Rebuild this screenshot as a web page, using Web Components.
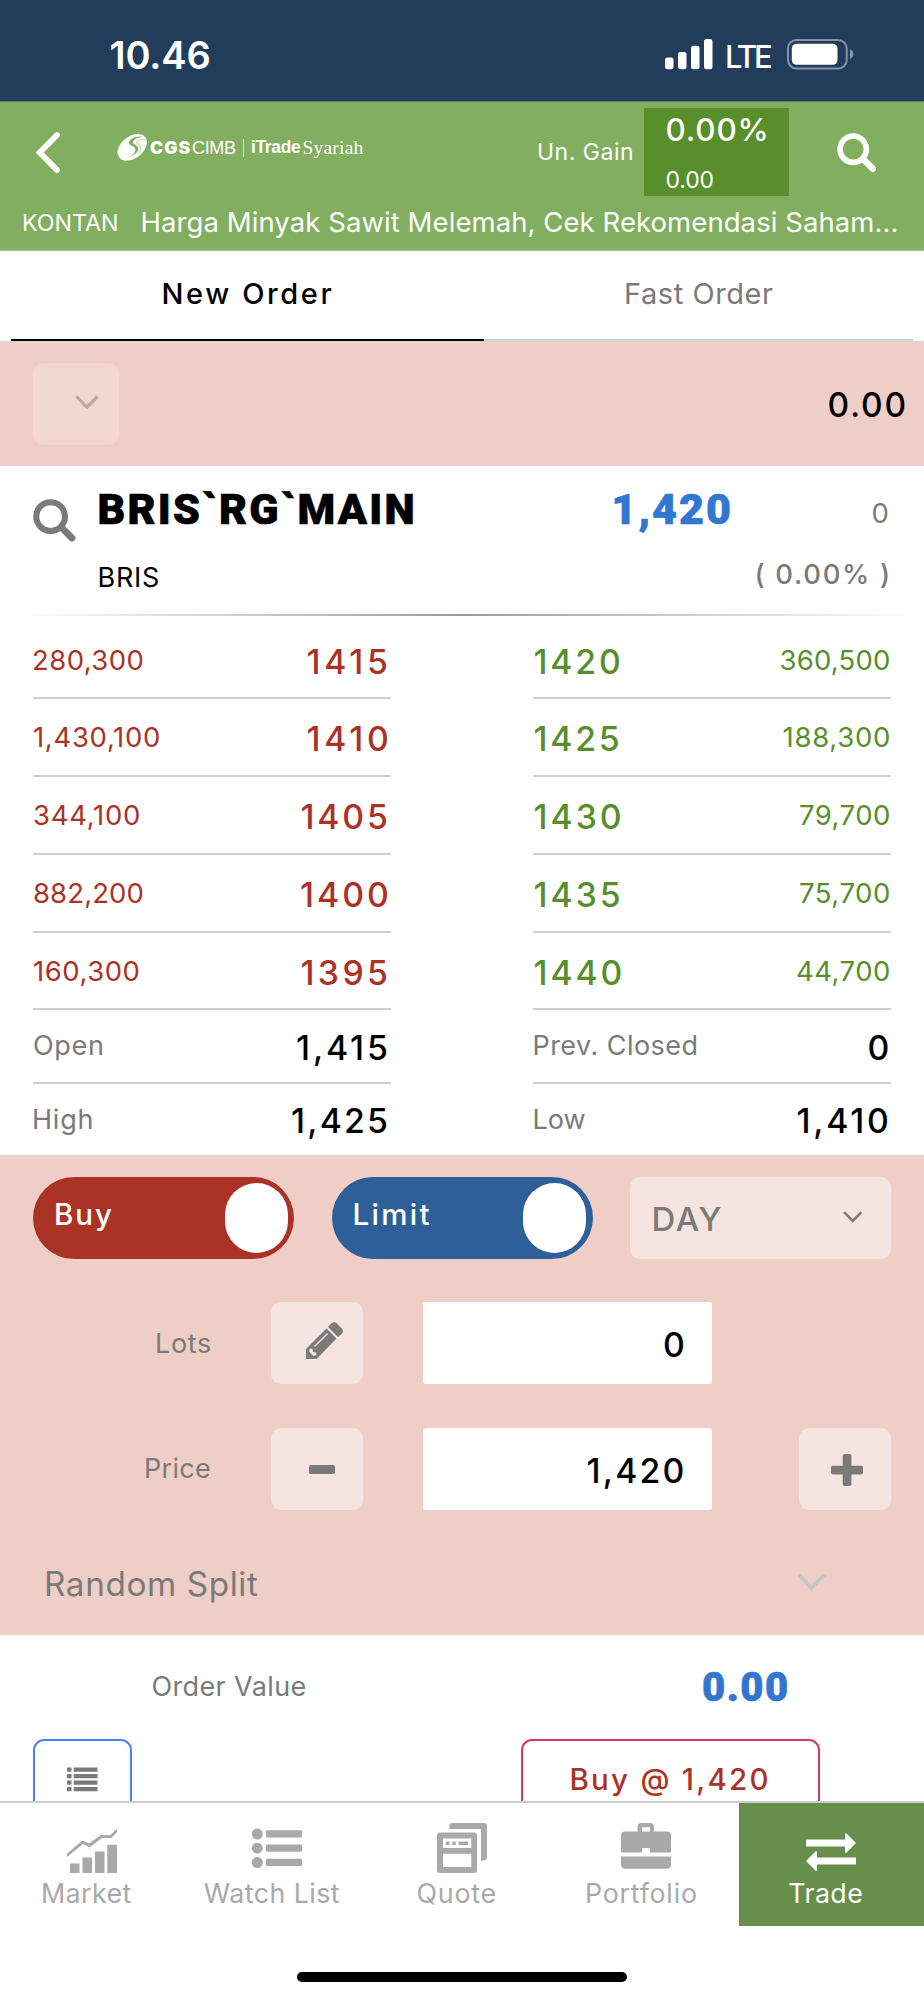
<!DOCTYPE html>
<html lang="id">
<head>
<meta charset="utf-8">
<title>iTrade Syariah</title>
<style>
html,body{margin:0;padding:0;background:#fff}
body{width:924px;height:2000px;overflow:hidden;font-family:Inter,"Liberation Sans",sans-serif}
</style>
</head>
<body>
<trade-app></trade-app>
<script>
const ctx = document.createElement('canvas').getContext('2d');
const FAMILIES = {
  inter: 'Inter, "Liberation Sans", sans-serif',
  roboto: 'Roboto, sans-serif',
  sans: '"Liberation Sans", sans-serif',
  serif: '"Liberation Serif", serif'
};

/* A single line of text tracked out so that its ink fills exactly "w" pixels. */
class UiText extends HTMLElement {
  connectedCallback() {
    if (this.shadowRoot) return;
    const a = (n, d) => this.getAttribute(n) || d;
    const size = parseFloat(a('size', '27')), weight = a('weight', '400');
    const face = a('face', 'inter'), family = FAMILIES[face];
    const w = parseFloat(a('w', '0'));
    const text = this.textContent;
    ctx.font = `${weight} ${size}px ${family}`;
    const m = ctx.measureText(text);
    const ink = m.actualBoundingBoxLeft + m.actualBoundingBoxRight;
    const n = [...text].length;
    const ls = n > 1 && w ? (w - ink) / (n - 1) : 0;
    const lead = face === 'inter' ? size + 1.5 : size;
    const root = this.attachShadow({mode: 'open'});
    root.innerHTML = `<style>
      :host{display:block;flex:none;width:${w || ink}px;height:${size}px;
        font:${weight} ${size}px/${lead}px ${family};letter-spacing:${ls}px;white-space:pre;
        color:${a('color', 'inherit')};margin-left:${a('ml', '0')}px;margin-top:${a('mt', '0')}px;
        ${face === 'roboto' ? '-webkit-text-stroke:.7px currentColor' : ''}}
      span{display:inline-block;margin-left:${m.actualBoundingBoxLeft}px}
    </style><span><slot></slot></span>`;
  }
}
customElements.define('ui-text', UiText);

const ICONS = {
  back: [24, 41, '<path d="M21 3 3.700 20.500 21 38" fill="none" stroke="currentColor" stroke-width="5.800" stroke-linecap="round"/>'],
  search: [40, 40, '<circle cx="16.200" cy="16.200" r="13.200" fill="none" stroke="currentColor" stroke-width="5.600"/><path d="m26.800 26.800 9 9" stroke="currentColor" stroke-width="6.400" stroke-linecap="round"/>'],
  chevron: [26, 16, '<path d="m1.5 1.5 11.500 11.700L24.500 1.500" fill="none" stroke="currentColor" stroke-width="3.400"/>'],
  signal: [48, 31, '<rect y="18.500" width="8.500" height="11.800" rx="2.500"/><rect x="13" y="13" width="8.500" height="17.300" rx="2.500"/><rect x="26" y="6.700" width="8.500" height="23.600" rx="2.500"/><rect x="39" y="0" width="8.500" height="30.300" rx="2.500"/>'],
  battery: [68, 31, '<rect x="1" y="1" width="58.700" height="28.500" rx="8.500" fill="none" stroke="#8492a5" stroke-width="2"/><rect x="4.800" y="4.800" width="45.700" height="21" rx="4.800"/><path d="M62.800 10.300c5 1.500 5 8 0 9.500z" fill="#8492a5"/>'],
  logo: [31, 27, '<g transform="translate(15.2 13.300)"><ellipse rx="16.500" ry="11" transform="rotate(-38)"/><path d="M10.500-10.600C3-11.500-3.500-8-3.200-4.300-2.800-1.500 3.500-1.200 3.200 2.800 3 6.500-1.500 9-4.500 10.300 2 8.200 6.200 5 6.200 1.500 6.200-2.200.6-2.400.8-5 .9-8 5.500-9.600 10.500-10.600z" fill="#81ae5f"/><path d="M14-7C8-9 3-6 4.500-4.300 9-2.500 10 2 6 6.500" fill="none" stroke="#81ae5f" stroke-width=".6"/></g>'],
  pencil: [37, 37, '<path d="M0 27 20.500 6.500 30.500 16.500 10.500 37H0z"/><path d="m22 5 3.700-3.700Q28-.8 30.500 1.200l5.500 5.500Q38 9 36 11.500L32 15z"/><path d="m4 26.500 2.500.3.500 3.200 3.200.5.300 2.500-3 1L3 29.500z" fill="#f6e4e0"/><path d="M8.500 24.500 21.500 11.500" stroke="#f6e4e0" stroke-width="1.500"/>'],
  minus: [26, 9, '<rect width="26" height="9" rx="1.800"/>'],
  plus: [32, 32, '<rect y="11.700" width="32" height="8.700" rx="1.800"/><rect x="11.700" width="8.700" height="32" rx="1.800"/>'],
  lines: [31, 25, '<path d="M0 .5h4.500v4.300H0zM6.700.5H30.500v4.300H6.700zM0 7h4.500v4.300H0zM6.700 7H30.500v4.300H6.700zM0 13.500h4.500v4.300H0zM6.700 13.500H30.500v4.300H6.700zM0 20h4.500v4.300H0zM6.700 20H30.500v4.300H6.700z"/>'],
  market: [50, 50, '<path d="M3 40.500h9.500V50H3zM15.500 34.500H25V50h-9.500zM28 28.500h9.500V50H28zM40.300 21.700H50V50h-9.700z"/><path d="M0 30.500 15.500 17.500 22 20.500 34 12h9.500L50 5.500V9l-5.500 6H35L22.500 24.500 16 21 0 34z"/>'],
  list: [50, 50, '<circle cx="5.300" cy="11" r="5.500"/><circle cx="5.300" cy="25.200" r="5.500"/><circle cx="5.300" cy="39.500" r="5.500"/><rect x="14" y="7.300" width="36" height="7.300" rx="1"/><rect x="14" y="21.500" width="36" height="7.300" rx="1"/><rect x="14" y="35.800" width="36" height="7.300" rx="1"/>'],
  quote: [50, 50, '<path d="M12.300 6V3q0-3 3-3H47q3 0 3 3v31.500q0 3-3 3h-3V6z"/><path fill-rule="evenodd" d="M3 9.500h34q3 0 3 3V47q0 3-3 3H3q-3 0-3-3V12.500q0-3 3-3zm3 6V25h28.300v-9.500zm0 15.200V44h28.300V30.700z"/><path d="M9 18.500h3.500V22H9zm6.200 0h3.500V22h-3.500zm6.300 0H31V22h-9.500z"/>'],
  portfolio: [50, 50, '<path fill-rule="evenodd" d="M16.500 8.500V4q0-4 4-4H29q4 0 4 4v4.500H46q4 0 4 4v17H29V25h-8v4.500H0v-17q0-4 4-4zm4.500 0h8V4.300h-8z"/><path d="M0 33.500h50v8.300q0 4-4 4H4q-4 0-4-4z"/>'],
  trade: [50, 50, '<path d="M0 16.500h39v-6L40 10l10 10-10 10-1-.5v-6H0zM50 41.500H11v6l-1 .5L0 38l10-10 1 .5v6h39z"/>']
};
class UiIcon extends HTMLElement {
  connectedCallback() {
    if (this.shadowRoot) return;
    const [w, h, body] = ICONS[this.getAttribute('name')];
    const width = parseFloat(this.getAttribute('w') || w);
    this.attachShadow({mode: 'open'}).innerHTML = `<style>:host{display:block;flex:none}
      svg{display:block;fill:currentColor;overflow:visible}</style>
      <svg width="${width}" height="${width * h / w}" viewBox="0 0 ${w} ${h}">${body}</svg>`;
  }
}
customElements.define('ui-icon', UiIcon);

const define = (name, html) => {
  const t = document.createElement('template');
  t.innerHTML = html;
  customElements.define(name, class extends HTMLElement {
    constructor() {
      super();
      this.attachShadow({mode: 'open'}).append(t.content.cloneNode(true));
    }
  });
};

define('status-bar', `<style>
:host{display:flex;align-items:center;height:101px;box-sizing:border-box;padding:9px 0 0 110.500px;background:#213d5b;color:#fff}
.s{margin-left:455.500px;margin-top:-1px}.b{margin-left:15.500px;margin-top:-1px}
</style>
<ui-text size="38" weight="600" w="99">10.46</ui-text>
<ui-icon class="s" name="signal"></ui-icon>
<ui-text size="31" weight="500" w="44" ml="14" mt="2">LTE</ui-text>
<ui-icon class="b" name="battery"></ui-icon>`);

define('app-header', `<style>
:host{display:block;height:150px;box-sizing:border-box;background:#81ae5f;color:#fff;border-top:1px solid #5d8460;border-bottom:1px solid #a6cb8e}
.top{display:flex;align-items:center;height:100px;padding-left:36px}
.brand{display:flex;align-items:center;margin:-9px 0 0 57px}
.sep{width:1.500px;height:18px;background:#d4e4c9;margin:0 8px 0 6.500px}
.gain{width:145px;height:88.500px;margin-left:12px;background:#588f2b;box-sizing:border-box;padding:5.500px 0 0 22.500px}
.find{margin-left:47.500px;margin-top:1px}
.news{display:flex;align-items:center;height:40px;padding-left:24px}
</style>
<div class="top"><ui-icon name="back"></ui-icon>
<div class="brand"><ui-icon name="logo"></ui-icon>
<ui-text face="inter" weight="900" size="17.500" w="40.500" ml="2" mt="-1">CGS</ui-text><ui-text face="sans" size="18" w="44" ml="1.500">CIMB</ui-text>
<div class="sep"></div><ui-text face="sans" weight="700" size="17.500" w="49" mt="1">iTrade</ui-text><ui-text face="serif" size="19.500" w="60" ml="2.500">Syariah</ui-text></div>
<ui-text size="23" w="93" ml="175.500" mt="-1">Un. Gain</ui-text>
<div class="gain"><ui-text size="31.500" weight="500" w="99">0.00%</ui-text><ui-text size="23" w="47" mt="23">0.00</ui-text></div>
<ui-icon class="find" name="search"></ui-icon></div>
<div class="news"><ui-text size="23.300" w="93" mt="2">KONTAN</ui-text><ui-text size="27.500" w="754" ml="25.500">Harga Minyak Sawit Melemah, Cek Rekomendasi Saham...</ui-text></div>`);

define('order-tabs', `<style>
:host{display:flex;height:90px;padding:0 11px;background:#fff}
div{display:flex;height:90px;box-sizing:border-box;border-bottom:2px solid #cfd1cf;padding-top:28px}
.a{width:473px;padding-left:152.500px;border-color:#000;color:#000}.b{width:429px;padding-left:142px;color:#7a7a7a}
</style>
<div class="a"><ui-text size="29" weight="500" w="168">New Order</ui-text></div>
<div class="b"><ui-text size="29" w="147">Fast Order</ui-text></div>`);

define('account-bar', `<style>
:host{display:flex;justify-content:space-between;height:125px;box-sizing:border-box;padding:22px 19.500px 0 33px;background:#eecec7}
.sel{width:86px;height:82px;border-radius:11px;background:#f2d7d2;color:#bda9a4;box-sizing:border-box;padding:32px 0 0 41.500px}
</style>
<div class="sel"><ui-icon name="chevron" w="24"></ui-icon></div>
<ui-text size="33.500" weight="500" w="76" mt="25">0.00</ui-text>`);

define('quote-head', `<style>
:host{display:flex;height:149.500px;box-sizing:border-box;padding:22px 36px 0 32.500px;background:#fff
 linear-gradient(90deg,#fff 2%,#9c9c9c 50%,#fff 99.500%) 0 100%/100% 2px no-repeat;color:#000}
.i{color:#7a7a7a;margin-top:10.500px}
.n{margin-left:23.500px;width:515px}.p{width:116px}.c{display:flex;flex-direction:column;align-items:flex-end;flex:1;color:#7a7a7a}
</style>
<ui-icon class="i" name="search" w="43.500"></ui-icon>
<div class="n"><ui-text face="roboto" weight="900" size="43" w="313">BRIS\`RG\`MAIN</ui-text><ui-text size="27" w="58.500" mt="32.500">BRIS</ui-text></div>
<div class="p"><ui-text face="roboto" weight="900" size="43" w="115.500" color="#3176d1">1,420</ui-text></div>
<div class="c"><ui-text size="27.500" w="15.500" mt="11">0</ui-text><ui-text size="27.500" weight="500" w="131.500" mt="33">( 0.00% )</ui-text></div>`);

/* One line of the order book: what is slotted in sits at its two ends. */
define('book-row', `<style>
:host{display:flex;justify-content:space-between;align-items:center;box-sizing:border-box;height:77.800px;border-bottom:2px solid #cecece}
:host([short]){height:73.400px}:host([last]){border:0;height:71.500px}
</style><slot></slot>`);

const row = (attr, l, r) => `<book-row ${attr}><ui-text ${l[1]} w="${l[2]}">${l[0]}</ui-text><ui-text ${r[1]} w="${r[2]}">${r[0]}</ui-text></book-row>`;
const VOL = 'size="27.500"', PRICE = 'size="33.800" weight="500" mt="2"', LABEL = 'size="27" color="#7a7a7a" mt="-1"', STAT = 'size="33.800" weight="500" color="#000" mt="1"';
define('order-book', `<style>
:host{display:flex;justify-content:space-between;height:539.500px;box-sizing:border-box;padding:6px 33px 0;background:#fff}
.bid,.ask{width:358px}
.bid{color:#ab3326}.ask{color:#588f2b}
.bid book-row{padding:0 4px 0 1px}.ask book-row{padding:0 2px 0 1.500px}.ask book-row[short],.ask book-row[last]{padding-right:4px}
</style>
<div class="bid">
${row('', ['280,300', VOL, 108.5], ['1415', PRICE, 79.5])}
${row('', ['1,430,100', VOL, 125], ['1410', PRICE, 79.5])}
${row('', ['344,100', VOL, 105], ['1405', PRICE, 85.5])}
${row('', ['882,200', VOL, 108.5], ['1400', PRICE, 86])}
${row('', ['160,300', VOL, 104.5], ['1395', PRICE, 85.500])}
${row('short', ['Open', LABEL, 68], ['1,415', STAT, 90])}
${row('last', ['High', LABEL, 57.5], ['1,425', STAT, 95])}
</div>
<div class="ask">
${row('', ['1420', PRICE, 84.5], ['360,500', VOL, 108.5])}
${row('', ['1425', PRICE, 84.3], ['188,300', VOL, 105.5])}
${row('', ['1430', PRICE, 85.3], ['79,700', VOL, 89])}
${row('', ['1435', PRICE, 85.3], ['75,700', VOL, 89])}
${row('', ['1440', PRICE, 86], ['44,700', VOL, 92])}
${row('short', ['Prev. Closed', LABEL, 162], ['0', STAT, 18.5])}
${row('last', ['Low', LABEL, 51], ['1,410', STAT, 89.5])}
</div>`);

define('toggle-pill', `<style>
:host{display:flex;justify-content:space-between;width:261px;height:82px;box-sizing:border-box;border-radius:41px;padding:6px 6.500px 0 23px;color:#fff}
i{width:63px;height:70px;border-radius:31.500px;background:#fff}
</style><slot></slot><i></i>`);

define('soft-button', `<style>
:host{display:flex;align-items:center;width:92px;height:82px;box-sizing:border-box;border-radius:10px;background:#f6e4e0;color:#7a7a7a}
</style><slot></slot>`);

define('number-field', `<style>
:host{display:flex;align-items:center;justify-content:flex-end;width:289px;height:82px;box-sizing:border-box;padding-right:29.500px;border-radius:3px;background:#fff;color:#000;margin-left:60px}
</style><slot></slot>`);

define('order-form', `<style>
:host{display:block;height:479.500px;box-sizing:border-box;padding:22px 33px 0;background:#eecec7;color:#7a7a7a}
.r{display:flex;align-items:center;height:82px}
.top{justify-content:space-between}.lots{margin-top:43px}.price{margin-top:43.500px}
.lbl{width:177px;display:flex;justify-content:flex-end}
.lots soft-button,.price soft-button{margin-left:61px}
.price number-field+soft-button{margin-left:87px}
.split{display:flex;justify-content:space-between;padding:57px 65px 0 13px}
.split ui-icon{color:#c4c4c4;margin-top:6.500px}
</style>
<div class="r top">
<toggle-pill style="background:#ab3326"><ui-text size="29.500" weight="500" w="56" mt="16">Buy</ui-text></toggle-pill>
<toggle-pill style="background:#2f5f99"><ui-text size="29.500" weight="500" w="75" mt="16">Limit</ui-text></toggle-pill>
<soft-button style="width:261px"><ui-text size="33" weight="500" w="68" ml="23.500" mt="1">DAY</ui-text><ui-icon name="chevron" w="19.500" style="margin:-3px 0 0 121px"></ui-icon></soft-button></div>
<div class="r lots"><div class="lbl"><ui-text size="27" w="53">Lots</ui-text></div><soft-button><ui-icon name="pencil" style="margin:-5px 0 0 35px"></ui-icon></soft-button><number-field><ui-text size="33.800" weight="500" w="18.500" mt="2">0</ui-text></number-field></div>
<div class="r price"><div class="lbl"><ui-text size="27" w="64">Price</ui-text></div><soft-button><ui-icon name="minus" style="margin:2px 0 0 38px"></ui-icon></soft-button><number-field><ui-text size="33.800" weight="500" w="95" mt="2">1,420</ui-text></number-field><soft-button><ui-icon name="plus" style="margin:2px 0 0 32px"></ui-icon></soft-button></div>
<div class="split"><ui-text size="33.300" w="212">Random Split</ui-text><ui-icon name="chevron" w="29"></ui-icon></div>`);

define('order-footer', `<style>
:host{display:block;height:166px;overflow:hidden;background:#fff;color:#7a7a7a}
.v{display:flex;justify-content:space-between;height:104px;align-items:center;padding:0 137px 0 152.500px;box-sizing:border-box}
.b{display:flex;justify-content:space-between;padding:0 104px 0 32.500px}
.x{box-sizing:border-box;height:82px;border:2px solid #4a80ef;border-radius:11px;width:99px;padding:26px 0 0 32.500px}
.y{border-color:#d4395b;width:299.500px;padding:23.500px 0 0 49px;color:#ab3326}
</style>
<div class="v"><ui-text size="27" w="153">Order Value</ui-text><ui-text face="roboto" size="40" weight="900" w="84" mt="2" color="#3176d1">0.00</ui-text></div>
<div class="b"><div class="x"><ui-icon name="lines"></ui-icon></div><div class="x y"><ui-text size="29.500" weight="500" w="196">Buy @ 1,420</ui-text></div></div>`);

define('nav-item', `<style>
:host{display:flex;flex-direction:column;width:184.800px;height:123px;box-sizing:border-box;padding-top:20px;color:#a9a9a9;align-items:flex-start}
:host([active]){background:#688e4b;color:#fff}
</style><slot></slot>`);

define('bottom-nav', `<style>
:host{display:flex;border-top:2px solid #cecece;background:#fff}
</style>
<nav-item><ui-icon name="market" style="margin-left:67px"></ui-icon><ui-text size="26.800" w="88.500" ml="43" mt="6">Market</ui-text></nav-item>
<nav-item><ui-icon name="list" style="margin-left:67px"></ui-icon><ui-text size="26.800" w="136" ml="19" mt="6">Watch List</ui-text></nav-item>
<nav-item><ui-icon name="quote" style="margin-left:67.400px"></ui-icon><ui-text size="26.800" w="78" ml="48" mt="6">Quote</ui-text></nav-item>
<nav-item><ui-icon name="portfolio" style="margin-left:67px"></ui-icon><ui-text size="26.800" w="109" ml="32.500" mt="6">Portfolio</ui-text></nav-item>
<nav-item active><ui-icon name="trade" style="margin-left:67px"></ui-icon><ui-text size="26.800" w="73" ml="50" mt="6">Trade</ui-text></nav-item>`);

define('home-indicator', `<style>
:host{display:block;width:330.500px;height:10.500px;border-radius:6px;background:#000;margin:46px auto 0}
</style>`);

define('trade-app', `<style>
:host{display:flex;flex-direction:column;width:924px;height:2000px;background:#fff}
:host>*{flex:none}
</style>
<status-bar></status-bar><app-header></app-header><order-tabs></order-tabs><account-bar></account-bar>
<quote-head></quote-head><order-book></order-book><order-form></order-form><order-footer></order-footer>
<bottom-nav></bottom-nav><home-indicator></home-indicator>`);
</script>
</body>
</html>
